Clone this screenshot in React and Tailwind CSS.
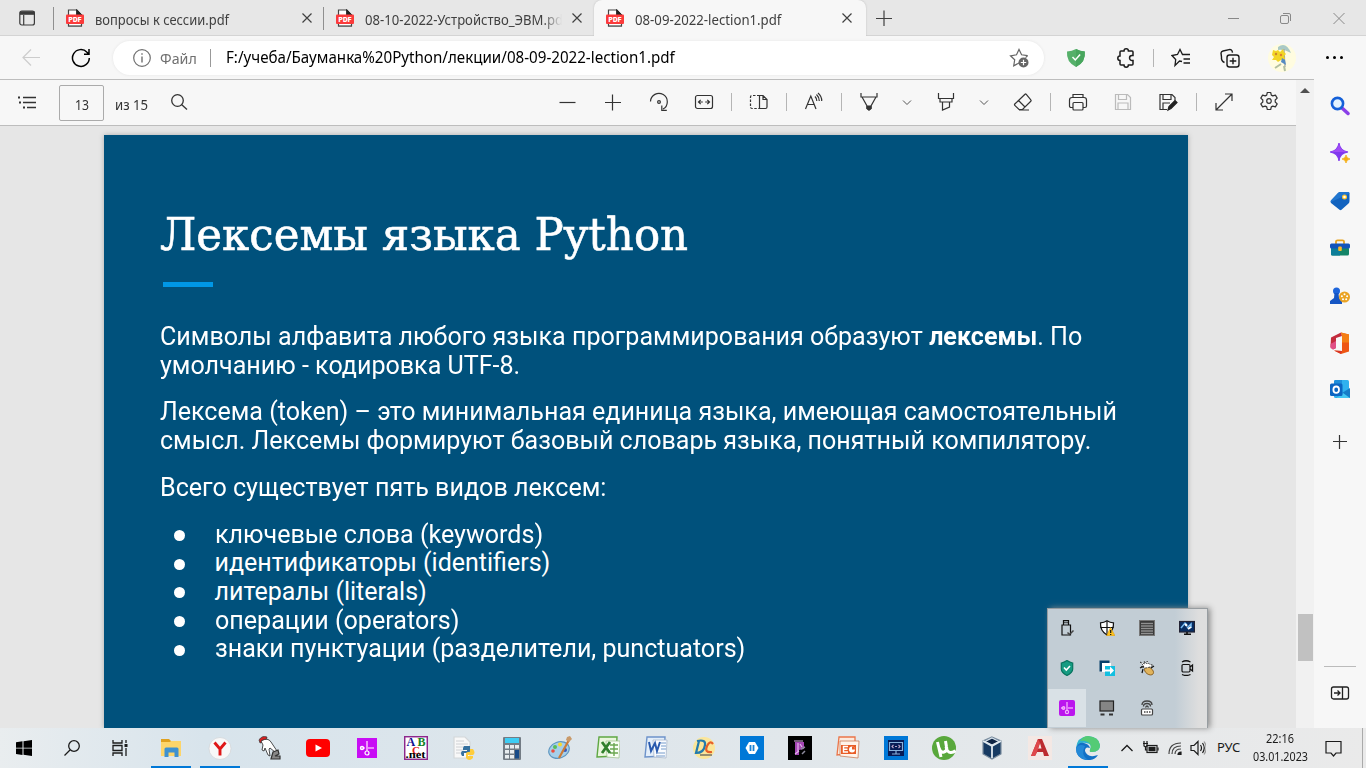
import React, { useLayoutEffect, useRef, useState } from "react";

// Text stretched or squeezed horizontally to a given width.
function Fit({ w, className = "", children }) {
  const ref = useRef(null);
  const [k, setK] = useState(1);
  useLayoutEffect(() => {
    setK(w / ref.current.offsetWidth);
  }, [w]);
  return (
    <span className="block shrink-0 whitespace-nowrap" style={{ width: w }}>
      <span ref={ref} className={"inline-block origin-left " + className} style={{ transform: `scaleX(${k})` }}>
        {children}
      </span>
    </span>
  );
}

function Ic({ s = 20, h, vb, className = "", sw = 1.2, children }) {
  return (
    <svg
      width={s}
      height={h || s}
      viewBox={vb || `0 0 ${s} ${h || s}`}
      fill="none"
      stroke="currentColor"
      strokeWidth={sw}
      className={"block shrink-0 " + className}
    >
      {children}
    </svg>
  );
}

const Sep = ({ className = "" }) => <div className={"w-px h-[18px] bg-[#b5b5b5] shrink-0 " + className} />;

const Pdf = ({ className = "" }) => (
  <Ic s={18} className={className}>
    <path d="M2.500 17V1h8.500l4.500 5v11z" fill="#fff" stroke="#444" />
    <path d="M10.500.5V6h5.500z" fill="#222" stroke="#222" strokeWidth=".8" />
    <rect y="5.500" width="18" height="9.500" rx="1" fill="#fb3b3b" stroke="none" />
    <text x="9" y="12.700" fontSize="6.400" fontWeight="900" fontFamily="Inter, sans-serif" fill="#fff" stroke="none" textAnchor="middle" textLength="13">
      PDF
    </text>
    <path d="M2 17.200h14" stroke="#555" strokeWidth=".8" />
  </Ic>
);

const X = ({ className = "" }) => (
  <Ic s={10} className={className}>
    <path d="M.5.5l9 9M9.500.5l-9 9" />
  </Ic>
);

const Chev = ({ className = "" }) => (
  <Ic s={10} className={"text-[#555] " + className} sw={1}>
    <path d="M1 3.500l4 4 4-4" />
  </Ic>
);

function Tabs() {
  return (
    <div className="flex h-9 shrink-0 items-center bg-[#e7e7e7] text-[14px] text-[#404040] shadow-[inset_0_-1px_0_#d4d4d4]">
      <Ic s={16} h={16} className="ml-[19px] text-[#3b3b3b]">
        <rect x=".8" y="1" width="14.600" height="14" rx="2" />
        <path d="M1 3h14.500" strokeWidth="3.600" />
        <path d="M4.700 5v10" />
      </Ic>
      <div className="ml-[18px] h-[23px] w-px shrink-0 bg-[#8f8f8f]" />
      <Pdf className="ml-3" />
      <div className="ml-[11px] pt-[2px]"><Fit w={134}>вопросы к сессии.pdf</Fit></div>
      <X className="ml-[73px]" />
      <div className="ml-[11px] h-[23px] w-px shrink-0 bg-[#8f8f8f]" />
      <Pdf className="ml-3" />
      <div className="ml-[11px] w-[197px] shrink-0 overflow-hidden pt-[2px] [mask-image:linear-gradient(to_right,black_90%,transparent)]">
        <Fit w={203}>08-10-2022-Устройство_ЭВМ.pdf</Fit>
      </div>
      <X className="ml-[10px]" />
      <div className="ml-[12px] flex h-9 w-[272px] shrink-0 items-center rounded-t-lg bg-[#f7f7f7] shadow-[0_0_2px_#bbb] [clip-path:inset(0_-3px_0_-3px)]">
        <Pdf className="ml-3" />
        <div className="ml-[11px] pt-[2px]"><Fit w={146}>08-09-2022-lection1.pdf</Fit></div>
        <X className="ml-[61px]" />
      </div>
      <Ic s={16} className="ml-[10px]"><path d="M8 .5v16M0 8.500h16" /></Ic>
      <div className="flex-1" />
      <Ic s={12} className="mr-[41px] text-[#888]" sw={1}><path d="M1 6.500h11" /></Ic>
      <Ic s={12} className="mr-[41px] text-[#888]" sw={1}>
        <rect x=".5" y="3.500" width="8" height="8" rx="1.500" />
        <path d="M3 1.500h6q1.500 0 1.500 1.500v6" />
      </Ic>
      <Ic s={12} className="mr-[21px] text-[#888]" sw={1}><path d="M.5 1l11 11M11.500 1l-11 11" /></Ic>
    </div>
  );
}

function AddressBar() {
  return (
    <div className="flex h-[43px] shrink-0 items-center bg-[#f7f7f7]">
      <Ic s={18} className="ml-[22px] text-[#ccc]"><path d="M18 8.500H1M9 .5l-8 8 8 8" /></Ic>
      <Ic s={20} className="ml-[31px] text-black" sw={1.500}>
        <path d="M18.300 10a8.400 8.400 0 1 1-2.300-5.800l1.700 1.700M18 1v5.200h-5" />
      </Ic>
      <div className="ml-[22px] flex h-[34px] w-[931px] shrink-0 items-center rounded-full bg-white shadow-[0_0_3px_#e4e4e4]">
        <Ic s={18} className="ml-[20px] text-[#707070]">
          <circle cx="9" cy="9" r="8.300" />
          <path d="M9 7.500v6M9 4.200v1.600" strokeWidth="1.400" />
        </Ic>
        <div className="ml-[9px] pt-px text-[15px] text-[#707070]"><Fit w={37}>Файл</Fit></div>
        <div className="ml-[13px] h-[18px] w-px bg-[#999]" />
        <div className="ml-[15px] pt-px text-[15.500px] text-black"><Fit w={449}>F:/учеба/Бауманка%20Python/лекции/08-09-2022-lection1.pdf</Fit></div>
        <Ic s={20} className="ml-[334px] text-[#666]">
          <path d="M10 15l-5.300 2.800 1-6-4.200-4 6-1L10 1.500l2.600 5.300 6 .9" />
          <path d="M18.600 7.700l-2 2" />
          <circle cx="14.500" cy="14.500" r="5" fill="#666" stroke="none" />
          <path d="M14.500 11.800v5.400M11.800 14.500h5.400" stroke="#fff" />
        </Ic>
      </div>
      <Ic s={20} className="ml-[22px]">
        <path d="M1 3.500Q6 3 10 1q4 2 8.800 2.500Q20 14 10 19 0 14 1 3.500z" fill="#55b06a" stroke="none" />
        <path d="M10 1q4 2 8.800 2.500Q20 14 10 19z" fill="#48a65e" stroke="none" />
        <path d="M6.500 9l2.800 3 4.800-5.500" stroke="#fff" strokeWidth="1.500" />
      </Ic>
      <Ic s={20} className="ml-[30px] text-[#1b1b1b]" sw={1.500}>
        <path d="M5 3h3a2.200 2.200 0 0 1 4.400 0H16q1 0 1 1v3.500h-1a2.400 2.400 0 0 0 0 4.900h1V16q0 1-1 1h-3.600a2.200 2.200 0 0 1-4.400 0H5q-1 0-1-1v-3.600A2.200 2.200 0 0 1 4 8V4q0-1 1-1z" />
      </Ic>
      <Sep className="ml-[17px]" />
      <Ic s={20} className="ml-[17px] text-[#1b1b1b]" sw={1.300}>
        <path d="M11 13.500L8.500 13 4 17.500l.7-6L1 7.500l5.500-1L9 1.500l2.500 5H19M12.500 11H19M12.500 15H19" />
      </Ic>
      <Ic s={20} className="ml-[29px] text-[#1b1b1b]" sw={1.400}>
        <rect x="7" y="7" width="12" height="12" rx="2.500" />
        <path d="M13 9.700v6.600M9.700 13h6.600M4.500 14.500Q1 13 1.500 9L1 5q.2-1.500 2-2l6-1.400q3-.6 3.500 3" />
      </Ic>
      <Ic s={28} className="ml-[28px]">
        <circle cx="14" cy="14" r="14" fill="#fffce0" stroke="none" />
        <path d="M10 3q8-6 13 6-7-4-13-3z" fill="#a9c9c5" stroke="none" />
        <path d="M16 5l1 18" stroke="#a6a79d" />
        <path d="M5 6l3 1 2-1 2 2 3-3 1 3 2 2-2 2 1 3-4 1-3 2-2-2-4 0 2-3-2-2z" fill="#f2d525" stroke="none" />
        <circle cx="8" cy="10" r="1.200" fill="#cf842b" stroke="none" /><circle cx="13" cy="11" r="1.200" fill="#df832c" stroke="none" />
        <path d="M14 14l3 2 1 5-5-3z" fill="#568bc2" stroke="none" />
        <path d="M13 20l-6 4M16 22l1 5" stroke="#b2bfa0" strokeWidth="2" />
      </Ic>
      <div className="ml-[30px] flex gap-[4px]">
        <i className="h-[3px] w-[3px] rounded-full bg-black" /><i className="h-[3px] w-[3px] rounded-full bg-black" /><i className="h-[3px] w-[3px] rounded-full bg-black" />
      </div>
    </div>
  );
}

function PdfBar() {
  return (
    <div className="flex h-[47px] shrink-0 items-center border-y border-[#bdbdbd] bg-[#f7f7f7] text-[#333]">
      <Ic s={18} className="ml-[18px] -mt-[2px]" sw={1.300}>
        <path d="M5 4.500h13M5 9.500h13M9 14.500h9" /><path d="M0 4.500h2M1 9.500h2M5 14.500h2" strokeWidth="2" />
      </Ic>
      <div className="ml-[23px] flex h-9 w-[45px] shrink-0 items-center justify-center rounded-[2px] border border-[#ababab] pt-[3px] text-[14px]"><Fit w={14}>13</Fit></div>
      <div className="ml-[11px] pt-[4px] text-[14px]"><Fit w={33}>из 15</Fit></div>
      <Ic s={18} className="ml-[22px] -mt-px" sw={1.300}><circle cx="7.500" cy="7.500" r="5.800" /><path d="M11.500 11.500l5.500 5" /></Ic>
      <div className="-mt-px flex items-center">
        <Ic className="ml-[370px]"><path d="M1.500 10.500h16" /></Ic>
        <Ic className="ml-[25px]"><path d="M2 10.500h16M9.500 2.500v16" /></Ic>
        <Ic className="ml-[26px]"><path d="M1.500 9.500a8.400 8.400 0 1 1 12.500 7.600M12.800 13.500v4.800h5" /><circle cx="10" cy="10" r="1.400" /></Ic>
        <Ic className="ml-[25px]"><rect x="1.500" y="3.500" width="17" height="13" rx="2" /><path d="M4.500 10h4.300M11.200 10h4.300M6.700 7.800L4.500 10l2.200 2.200M13.300 7.800l2.200 2.200-2.200 2.200" /></Ic>
        <Sep className="ml-[17px]" />
        <Ic className="ml-[17px]"><path d="M10.500 3.500H14l4 4V15q0 1.500-1.500 1.500h-6zM14 3.500v4h4" /><path d="M10.500 3.500H3Q1.500 3.500 1.500 5v10q0 1.500 1.500 1.500h7" strokeDasharray="2.500 1.500" /></Ic>
        <Sep className="ml-[17px]" />
        <Ic className="ml-[17px]"><path d="M1.500 17L6.800 4 12 17M3.200 12.500h7M11 4.500q2 2 1.800 4.500M12.500 2.500q3 3 2.800 6.500M14 1q4 3.500 3.700 8" /></Ic>
        <Sep className="ml-[17px]" />
        <Ic className="ml-[17px]"><path d="M2 1v4h16V1M3 5l5 9v2.500l2 1.500 2-1.500V14l5-9M8 14h4" /><path d="M8 14.500h4v2l-2 1.500-2-1.500z" fill="#333" /></Ic>
        <Chev className="ml-[23px]" />
        <Ic className="ml-[24px]"><path d="M2.500 1v5.500h15V1M4 6.500V10h12V6.500M6.500 10v8l7-3v-5" /></Ic>
        <Chev className="ml-[23px]" />
        <Ic className="ml-[24px]"><path d="M12 2.300L1.800 12q-.6.700 0 1.300L6 17.500h3.500l8.300-8.200q.7-.7 0-1.400L13.300 2.300q-.6-.6-1.300 0zM5.500 8.500l6.500 6.500M6 18h10" /></Ic>
        <Sep className="ml-[17px]" />
        <Ic className="ml-[17px]"><path d="M5 15.500H3.200Q1.500 15.500 1.500 14V8q0-2.500 2.500-2.500h12q2.500 0 2.500 2.500v6q0 1.500-1.700 1.500H15M5 5.500v-3h10v3" /><rect x="5" y="10.500" width="10" height="7.500" rx="1" /></Ic>
        <Ic className="ml-[25px] text-[#bbb]"><path d="M2.500 2.500h12l3 3v12h-15zM5.500 2.500v5h8v-5M5 17.500V11h10v6.500" /></Ic>
        <Ic className="ml-[25px]"><path d="M9 17.500H2v-15h12l3 3v3M5 2.500v5h8v-5M5 17V11h7" /><path d="M10 18l1-3.500 6-6 2 2-6 6z" fill="#222" stroke="#222" /></Ic>
        <Sep className="ml-[18px]" />
        <Ic className="ml-[17px]"><path d="M2 18L18 2M11 2h7v7M2 11v7h7" /></Ic>
        <Ic className="ml-[25px] -mt-[2px]"><path d="M8.300 1.500h3.400l.6 2.600 1.500.8 2.600-.8 1.800 3-2 1.900v2l2 1.900-1.800 3-2.600-.8-1.500.8-.6 2.600H8.300l-.6-2.600-1.500-.8-2.600.8-1.800-3 2-1.900V9l-2-1.900 1.800-3 2.600.8 1.500-.8z" strokeLinejoin="round" /><circle cx="10" cy="10" r="2.300" /></Ic>
      </div>
    </div>
  );
}

const Bullet = ({ w, children }) => (
  <li className="flex h-[28.700px] items-center">
    <i className="ml-[14px] mt-px h-[11px] w-[11px] rounded-full bg-white" />
    <div className="ml-[29.500px]"><Fit w={w}>{children}</Fit></div>
  </li>
);

function Slide() {
  return (
    <div className="ml-[104px] mt-[9px] h-[593px] w-[1084px] bg-[#00517c] pl-[57px] pt-[64px] font-[Roboto,sans-serif] text-[25px] leading-[28.700px] text-white shadow-[0_0_5px_#aaa]">
      <h1 className="-ml-px h-[68px] font-['DejaVu_Serif',serif] text-[45px] leading-[71px] [-webkit-text-stroke:0.6px_white]"><Fit w={528}>Лексемы языка Python</Fit></h1>
      <div className="ml-[1.500px] mt-[15px] h-[5px] w-[50.500px] bg-[#0097e6]" />
      <div className="-ml-px mt-[36px]">
        <Fit w={922}>Символы алфавита любого языка программирования образуют <b>лексемы</b>. По</Fit>
        <Fit w={360}>умолчанию - кодировка UTF-8.</Fit>
      </div>
      <div className="-ml-px mt-[18px]">
        <Fit w={957}>Лексема (token) – это минимальная единица языка, имеющая самостоятельный</Fit>
        <Fit w={931}>смысл. Лексемы формируют базовый словарь языка, понятный компилятору.</Fit>
      </div>
      <div className="-ml-px mt-[18px]"><Fit w={446}>Всего существует пять видов лексем:</Fit></div>
      <ul className="-ml-px mt-[18px]">
        <Bullet w={328}>ключевые слова (keywords)</Bullet>
        <Bullet w={336}>идентификаторы (identifiers)</Bullet>
        <Bullet w={212}>литералы (literals)</Bullet>
        <Bullet w={244}>операции (operators)</Bullet>
        <Bullet w={530}>знаки пунктуации (разделители, punctuators)</Bullet>
      </ul>
    </div>
  );
}

function Sidebar() {
  return (
    <div className="flex w-[52px] shrink-0 flex-col items-center bg-[#f7f7f7] pt-[17px]">
      <div className="flex flex-col items-center gap-[27.400px]">
        <Ic><path d="M12 12l6 5.500" stroke="#8a3fe8" strokeWidth="3.500" strokeLinecap="round" /><circle cx="7.500" cy="7.500" r="5.600" stroke="#1460d8" strokeWidth="2.600" fill="#e1f2ff" /></Ic>
        <Ic><path d="M9 0q.8 8 9 9-8.200 1-9 9-1-8-9-9 8-1 9-9z" fill="#8038ee" stroke="#8038ee" /><path d="M9 0q.8 8 9 9H0q8-1 9-9z" fill="#a04bf5" stroke="none" /><path d="M16 12q.5 3.500 4 4-3.500.5-4 4-.5-3.500-4-4 3.500-.5 4-4z" fill="#f5ae15" stroke="#f5ae15" strokeWidth=".8" /></Ic>
        <Ic><path d="M10 1h8q1.500 0 1.500 1.500V10q0 1.500-1 2.500l-7 6.300q-1 .8-2 0L1 12q-1-1.200 0-2.200L8 2q.8-1 2-1z" fill="#1263bf" stroke="none" /><path d="M10 1h8q1.500 0 1.500 1.500L1 11q-.8-1 0-1.700L8 2z" fill="#2176cf" stroke="none" /><circle cx="14.500" cy="6" r="1.900" fill="#fff" stroke="#ffc329" /></Ic>
        <Ic><path d="M6 6V3.500Q6 2.300 7.500 2.300h5Q14 2.300 14 3.500V6" stroke="#e8a31f" strokeWidth="1.800" /><rect x="1" y="9" width="18" height="8.500" rx="1.500" fill="#148467" stroke="none" /><path d="M1 9h9v8.500H2.500Q1 17.500 1 16z" fill="#0d7e99" stroke="none" /><rect y="5.500" width="20" height="5" rx="1.500" fill="#1354bb" stroke="none" /><rect x="8.200" y="8.500" width="3.600" height="4.500" rx="1" fill="#fdb827" stroke="none" /></Ic>
        <Ic><circle cx="6.500" cy="5" r="3.500" fill="#1e65db" stroke="none" /><path d="M4.500 7h4l.5 5 3 3v3H0v-3l4-3z" fill="#1656c4" stroke="none" /><circle cx="14.500" cy="11" r="5.500" fill="#eaa323" stroke="none" /><g fill="#fff" stroke="none"><circle cx="14.500" cy="8.200" r="1" /><circle cx="11.900" cy="10.200" r="1" /><circle cx="17.100" cy="10.200" r="1" /><circle cx="13" cy="13.300" r="1" /><circle cx="16.200" cy="13.300" r="1" /></g></Ic>
        <Ic s={20} h={22} className="-mt-px"><path d="M1 5.500L11 .5l1 3.500-6 2v10l-3 1.500L.5 15z" fill="#c32b3d" stroke="none" /><path d="M.5 12L6 9v7l-3 1.500L.5 16z" fill="#e04f85" stroke="none" /><path d="M11 .5l8 2v17l-8 2.500-7-3.500 8 .5V4z" fill="#ee5613" stroke="none" /><path d="M11 .5l8 2v8h-7V4z" fill="#f47e14" stroke="none" /><path d="M4 18.500l8 .500-1 3z" fill="#d83524" stroke="none" /></Ic>
        <Ic className="-mt-[2px]"><rect x="4" y="1" width="15" height="18" rx="1.500" fill="#2fb1ef" stroke="none" /><path d="M5 1h7v6H4V2z" fill="#1c8edb" stroke="none" /><path d="M12 14l8-5v10H6z" fill="#167dc8" stroke="none" /><path d="M13 14l7 5H6z" fill="#42c7f3" stroke="none" /><rect y="4.500" width="12.500" height="12.500" rx="1.500" fill="#0b65c2" stroke="none" /><ellipse cx="6.200" cy="10.700" rx="2.800" ry="3.200" stroke="#fff" strokeWidth="1.800" /></Ic>
      </div>
      <Ic s={14} className="mt-[36px] text-[#333]"><path d="M6.500 0v14M0 6.500h14" /></Ic>
      <div className="flex-1" />
      <div className="h-px w-8 bg-[#bbb]" />
      <Ic s={20} className="mb-[25px] mt-[16px] text-[#222]" sw={1.300}><rect x="1.500" y="4" width="17" height="12" rx="2" /><path d="M12.500 4v12M4 10h6M7.500 7.500L10 10l-2.500 2.500" /></Ic>
    </div>
  );
}

const Cell = ({ on, children }) => (
  <div className={"m-px flex h-[38px] w-[38px] items-center justify-center text-[#111] " + (on ? "bg-[#d9e1e6]" : "")}>{children}</div>
);

function Tray() {
  return (
    <div className="absolute left-[1047px] top-[608px] grid h-[120px] w-[160px] grid-cols-4 bg-gradient-to-r from-[#c2cdd5] from-80% to-[#dedede] to-95% shadow-[inset_1px_1px_0_#979da1,1px_0_0_#979da1,3px_0_6px_#888]">
      <Cell><Ic s={16} sw={1.200}><path d="M4.500 5V.7h5V5M3 5h8.500v10H3zM6 2v1.200M8 2v1.200" /><path d="M8.500 12.500l2 2 4-4" stroke="#444" strokeWidth="1.500" /></Ic></Cell>
      <Cell><Ic s={16} sw={1.200}><path d="M8 .8q3 2 6.500 2 .5 8-6.500 12.200Q1 11 1.500 2.800 5 2.800 8 .8z" fill="#fff" /><path d="M8 1v14M1.500 7.500h13" /><path d="M11.500 7.500L16 15.700H7.500z" fill="#ffc21c" stroke="#d79909" strokeWidth=".5" /><path d="M11.700 10v3M11.700 14v1" /></Ic></Cell>
      <Cell><Ic s={16}><rect x=".5" y=".5" width="15" height="15" fill="#333" stroke="#777" /><path d="M2 3.500h12M2 6h12M2 8.500h12M2 11h12M2 13.500h12" stroke="#909090" strokeWidth="1.300" /></Ic></Cell>
      <Cell><Ic s={16}><rect x=".5" y="1.500" width="15" height="10.500" fill="#082d62" stroke="#223" /><path d="M2 8l4-5 2 2M8 8l4-4v4" stroke="#79bdf3" strokeWidth="1.500" /><path d="M6 4l2 2M9 9l3-2" stroke="#fff" strokeWidth="2" /><path d="M5 14.200h7M8 12v2" strokeWidth="1.600" /></Ic></Cell>
      <Cell><Ic s={16}><path d="M8 .5q3 2 5.700 2.500v6q0 3.500-5.700 6.500-5.700-3-5.700-6.500V3Q5 2.500 8 .5z" fill="#169b82" stroke="#08745f" /><path d="M5 7.500L7.300 10 11 6" stroke="#fff" strokeWidth="1.600" /></Ic></Cell>
      <Cell><Ic s={16}><path d="M.5.5h10v3h-7v8h-3z" fill="#07406b" stroke="none" /><path d="M3 3h9v9H3z" fill="#fff" stroke="none" /><path d="M6 6h10v10H6z" fill="#12bfe0" stroke="none" /><path d="M5 9.500h6V6.500l4 4-4 4v-3H5z" fill="#fff" stroke="none" /></Ic></Cell>
      <Cell><Ic s={16}><ellipse cx="10" cy="11" rx="5" ry="3.300" transform="rotate(35 10 11)" fill="#e1b45d" stroke="#835716" strokeWidth=".8" /><path d="M1 2l5 2-1-3 3 3V1l2 3 4 1-3 2-4 1-5-1 2-2z" fill="#fff" stroke="#333" strokeWidth=".8" strokeDasharray="2 1" /><path d="M12 8l3-2M4 9l-1 4M1 8l4-2" /></Ic></Cell>
      <Cell><Ic s={16}><rect x="3" y="4.500" width="8" height="7.500" rx="1.200" /><path d="M11 7l2.500-2v6L11 9M3 2q4-2.500 8.500 0M3 14.500q4 2 8.500 0" strokeWidth="1.300" /></Ic></Cell>
      <Cell on><Ic s={16}><rect width="16" height="16" rx="2" fill="#bb16ee" stroke="none" /><path d="M8 2v8M2 8h4M9 8h5" stroke="#ed9afa" strokeWidth="1.500" /><circle cx="8" cy="12" r="1.600" stroke="#f3b4fb" /><circle cx="4.500" cy="8" r="1.300" stroke="#f3b4fb" /></Ic></Cell>
      <Cell><Ic s={16}><rect x="1" y="1" width="13.500" height="10" fill="#858585" stroke="#222" /><path d="M1.500 14.500h4M10 14.500h4" stroke="#333" strokeWidth="2" /></Ic></Cell>
      <Cell><Ic s={16}><rect x="2.500" y="9" width="11" height="6" rx="1" fill="#fff" stroke="#444" /><path d="M3 5q0-4 5-4t5 4M4.500 6.500q0-3 3.500-3t3.500 3M6.500 7.500q1.500-3 3 0M5 12h1.500M7.500 12H9M10 12h1.500" stroke="#444" strokeWidth="1.300" /></Ic></Cell>
    </div>
  );
}

const Task = ({ on, className = "", children }) => (
  <div className={"flex h-10 w-12 shrink-0 flex-col items-center " + className}>
    <div className="flex h-[38px] items-center pt-[2px]">{children}</div>
    {on && <div className="h-[2px] w-10 bg-[#0078d7]" />}
  </div>
);

function Taskbar() {
  return (
    <div className="flex h-10 shrink-0 items-center bg-gradient-to-r from-[#e9edef] via-[#d8e4ec] via-15% to-[#eaeaea] text-[#1b1b1b]">
      <Task><Ic s={16}><path d="M0 2.300l6.500-1v6.400H0zM7.500 1.200L16 0v7.700H7.500zM0 8.500h6.500V15L0 14zM7.500 8.500H16V16l-8.500-1.200z" fill="#000" stroke="none" /></Ic></Task>
      <Task><Ic s={16} sw={1.300}><circle cx="10" cy="6" r="5.300" /><path d="M6 10L.5 15.500" /></Ic></Task>
      <Task><Ic s={16} sw={1.300}><path d="M1 0v3h9V0M1 16v-3h9v3M1 5.500h9v5H1zM14 0v3M14 8v8" /><path d="M12.500 5.500h3" strokeWidth="3" /></Ic></Task>
      <Task on className="ml-[3px]"><Ic s={22}><path d="M1 2h8l2 2h10v15H1z" fill="#e0a11e" stroke="none" /><path d="M1 5h9l1-1h10v15H1z" fill="#fdd56a" stroke="none" /><path d="M4.500 20V12q0-1.500 1.500-1.500h11q1.500 0 1.500 1.500v8h-4v-4.500h-6V20z" fill="#3e91d0" stroke="none" /></Ic></Task>
      <Task on className="ml-px"><Ic s={24}><circle cx="12" cy="12.500" r="11" fill="#f8f8f8" stroke="#d0d3d6" strokeWidth=".7" /><path d="M6.500 6.500L12 13l5.500-6.500M12 12v7.500" stroke="#df1717" strokeWidth="2.900" /></Ic></Task>
      <Task className="ml-px"><Ic s={24}><path d="M2 4q3-5 8-3l-1 4-6 2z" fill="#d42121" stroke="#333" strokeWidth=".7" /><path d="M4 5q7-4 10 1l6 9-2 1-5-4-1 1 1 7-2-1-3-7-1 3-2-1 1-5z" fill="#fff" stroke="#222" strokeWidth=".8" /><path d="M16 16l5-2 1 4-4 2h5v3h-9z" fill="#888" stroke="#333" /></Ic></Task>
      <Task className="ml-px"><Ic s={24}><rect y="3" width="24" height="18" rx="4" fill="#f00" stroke="none" /><path d="M9.500 8.500v7l6.500-3.500z" fill="#fff" stroke="none" /></Ic></Task>
      <Task className="ml-px"><Ic s={20}><rect width="20" height="20" fill="#c80df5" stroke="none" /><path d="M10 3v10M3 10h5M11 10h6" stroke="#f4aefc" strokeWidth="1.700" /><circle cx="10" cy="15" r="2" stroke="#fff" /><circle cx="5" cy="10" r="1.600" stroke="#fff" /></Ic></Task>
      <Task className="ml-px"><Ic s={24}><rect x=".7" y=".7" width="22.600" height="22.600" fill="#fff" stroke="#8d278c" strokeWidth="1.500" /><g fontFamily="Liberation Serif, serif" fontWeight="bold" stroke="none"><text x="2.500" y="10" fontSize="12" fill="#11118f">A</text><text x="13.500" y="10" fontSize="12" fill="#138524">B</text><text x="8" y="17.500" fontSize="11" fill="#e12020">C</text><text x="1.500" y="22" fontSize="10" fill="#000" textLength="20" lengthAdjust="spacingAndGlyphs">.net</text></g></Ic></Task>
      <Task><Ic s={24}><path d="M2 1h11l5 5v16H2z" fill="#f8f8f8" stroke="#d4d7d9" /><path d="M4 5h8M4 8h12M4 11h12M4 14h8M4 17h5" stroke="#c4c7ca" strokeWidth=".8" /><path d="M12 10h6v5q0 2-2 2h-4v3h-2q-2-3 0-5h5v-1h-4v-2z" fill="#36719f" stroke="none" /><path d="M18 13h3q3 4 0 6h-5v1h5v2q-4 4-7 0v-4q0-2 2-2h2z" fill="#fecd3c" stroke="none" /></Ic></Task>
      <Task><Ic s={24}><rect x="3" y="1" width="18" height="23" rx="1" fill="#737c85" stroke="none" /><rect x="5" y="2" width="14" height="5" fill="#3ecdf4" stroke="none" /><path d="M5 9h4v3.500H5zM10 9h4v3.500h-4zM15 9h4v3.500h-4zM5 14h4v3.500H5zM10 14h4v3.500h-4zM5 19h4v3.500H5zM10 19h4v3.500h-4z" fill="#e8edf0" stroke="none" /><path d="M15 14h4v8.500h-4z" fill="#174a87" stroke="none" /></Ic></Task>
      <Task><Ic s={24}><ellipse cx="11" cy="14" rx="10.500" ry="8" transform="rotate(-20 11 14)" fill="#a5cfea" stroke="#5f97c0" /><circle cx="7" cy="11" r="2" fill="#58bd58" stroke="none" /><circle cx="12" cy="8.500" r="2" fill="#f7d92c" stroke="none" /><circle cx="5" cy="15" r="1.800" fill="#ea4e3d" stroke="none" /><circle cx="17" cy="14" r="2" fill="#3a58bb" stroke="none" /><path d="M21 4L11 22" stroke="#cc7b38" strokeWidth="2.200" /><path d="M19 1l3-1 2 3-3 3-3-2z" fill="#c99a6a" stroke="none" /></Ic></Task>
      <Task><Ic s={24}><path d="M3 1h18l-1 19-19 1z" fill="#e9f6dd" stroke="#5fa843" strokeWidth="1.400" /><path d="M10 5h14l-1 17-12-1z" fill="#f9fff5" stroke="#a5c493" strokeWidth=".8" /><path d="M14 9h8M14 13h8M14 17h8M18 7v13" stroke="#6ba850" strokeWidth="1.400" /><path d="M6 6l8 11M14 6L6 17" stroke="#30802c" strokeWidth="2.800" /></Ic></Task>
      <Task><Ic s={24}><path d="M3 1h18l-1 19-19 1z" fill="#e3eefa" stroke="#6d93ca" strokeWidth="1.400" /><path d="M9 4h14l-1 18-12-1z" fill="#fafcff" stroke="#aab8cb" strokeWidth=".8" /><path d="M17 7h5M17 10h5M17 13h5M12 17h9M12 20h9" stroke="#779ccc" /><path d="M5 6l2 9 4-8 2 8 3-9" stroke="#2859ae" strokeWidth="2" /></Ic></Task>
      <Task><Ic s={24}><circle cx="12" cy="12" r="11" fill="#fbe69a" stroke="none" /><path d="M5 5q9-2 8 4-1 8-9 8L7 5" stroke="#247bae" strokeWidth="2.200" /><path d="M21 8q-3-4-6 2-3 7 5 6" stroke="#e66028" strokeWidth="2.200" /><path d="M8 19h12" stroke="#555" /></Ic></Task>
      <Task><Ic s={24}><rect width="24" height="24" fill="#0078d7" stroke="none" /><path d="M9 6h6l3.500 6-3.500 6H9l-3.500-6z" fill="#fff" stroke="none" /><path d="M10.500 9v6M13.500 9v6" stroke="#1b83d5" strokeWidth="1.800" /></Ic></Task>
      <Task><Ic s={24}><rect width="24" height="24" fill="#000" stroke="none" /><path d="M7 6h9v7l-5 1v5H7z" fill="#a545b4" stroke="none" /><path d="M10 7v9M12 8l2 3M6 5l9 0M7 18l4-3" stroke="#e2b5ea" /><path d="M13 13l4-2M14 18l3-3" stroke="#8d8a9d" strokeWidth="1.500" /></Ic></Task>
      <Task><Ic s={24}><path d="M3 1h16v16L1 19z" fill="#fceadd" stroke="#ea754a" strokeWidth="1.300" /><path d="M4 5h19l-1 17-18-2z" fill="#fff3ea" stroke="#c97f5d" strokeWidth=".8" /><path d="M5 9h15v9H5z" fill="#e95c26" stroke="none" /><path d="M12 10.500H7.500v5.500H12M7.500 13.300h4" stroke="#fff" strokeWidth="1.400" /><circle cx="16" cy="13.500" r="3" fill="#fff" stroke="none" /><path d="M16 13.500v-3a3 3 0 0 1 3 3z" fill="#e95c26" stroke="none" /></Ic></Task>
      <Task><Ic s={24}><rect width="24" height="24" fill="#0078d7" stroke="none" /><rect x="4" y="4" width="16" height="16" fill="#081b55" stroke="none" /><path d="M5.500 6.500h13v8h-13zM12 14.500v3M8 18h8" stroke="#89b2dc" /><path d="M9.500 8.800l-1.500 1.700 1.500 1.700M14.500 8.800l1.500 1.700-1.500 1.700M11 10.500h2" stroke="#b8a0c5" /></Ic></Task>
      <Task><Ic s={24}><circle cx="12" cy="12" r="12" fill="#59a83c" stroke="none" /><path d="M5.500 6L9 21M7 12q1.500 5 5 4t2.500-5L13.500 5M14 11q1.500 6 5 5.500 3 0 4.500-2" stroke="#fff" strokeWidth="3" /></Ic></Task>
      <Task className="-ml-px"><Ic s={24} className="ml-px"><path d="M12 1l9 4v13l-9 5-9-5V5z" fill="#173b63" stroke="#7b8d9e" /><path d="M12 2l7 3.500-7 3.500-7-3.500z" fill="#0e2444" stroke="#dce7ef" /><path d="M3 5l9 5 9-5M12 10v12" stroke="#dfe8ef" strokeWidth="1.800" /></Ic></Task>
      <Task className="ml-px"><Ic s={24}><rect width="24" height="24" fill="#f4e8e4" stroke="none" /><path d="M3 20L10 3h4l7 17h-5l-1-4H9l-2 4z" fill="#bc2b2f" stroke="none" /><path d="M10 12.500h3.500L12 7z" fill="#f4e8e4" stroke="none" /><path d="M3 20L10 3l2 4-3 9-2 4z" fill="#df484b" stroke="none" /></Ic></Task>
      <Task on><Ic s={24}><path d="M0 12Q1 1 12 0q11 1 12 9 0 7-8 7-3 0-2-2 3-6-4-7Q3 6 0 12z" fill="#2cb3cf" stroke="none" /><path d="M12 0q11 1 12 9 0 7-8 7-3 0-2-2 3-7-5-9-2-.5-5 0 3-5 8-5z" fill="#54cb75" stroke="none" /><path d="M0 12q2-6 8-5 5 1 6 5-5-2-5 3 2 6 9 5l4-1q-4 6-12 5Q0 22 0 12z" fill="#1270c6" stroke="none" /><path d="M9 10q-5 9 3 14Q0 23 0 12q3-5 9-2z" fill="#2388d7" stroke="none" /></Ic></Task>
      <Ic s={12} className="ml-[9px]" sw={1.300}><path d="M.5 9L6 3.500 11.500 9" /></Ic>
      <Ic s={17} className="ml-[9px]"><rect x="5" y="5.500" width="10" height="7" /><path d="M6.500 9h7" strokeWidth="4.500" /><path d="M16 7.500v3M1 3.500h5M2 1v3M5 1v3M2 4v2l1.500 1L5 6V4M3.500 7v3H5" /></Ic>
      <Ic s={14} className="ml-[9px]"><path d="M1 13Q1 2 13 2M4 13q0-8 9-8M7 13q0-5 6-5" stroke="#444" /><path d="M10 14q0-3 3-3v3z" fill="#222" /></Ic>
      <Ic s={16} className="ml-[8px]"><path d="M1 5.500h3l4-4v13l-4-4H1zM10.500 5q2 3 0 6M12.500 3q3.500 5 0 10" /><path d="M14 1.500q4.500 6.500 0 13" stroke="#999" /></Ic>
      <div className="ml-[11px] text-[13px]"><Fit w={23}>РУС</Fit></div>
      <div className="ml-[13px] flex w-[54px] shrink-0 flex-col items-center text-[12.500px] leading-[18px]"><Fit w={28}>22:16</Fit><Fit w={55}>03.01.2023</Fit></div>
      <Ic s={17} className="ml-[18px]"><path d="M1 1.500h15v11.500h-5l-2.500 3L6 13H1z" /></Ic>
      <div className="ml-[20px] h-10 w-px bg-[#aaa]" />
    </div>
  );
}

export default function App() {
  return (
    <div className="relative flex h-[768px] w-[1366px] flex-col overflow-hidden font-['Noto_Sans','Open_Sans',sans-serif]">
      <Tabs />
      <AddressBar />
      <div className="flex h-[649px] shrink-0">
        <div className="flex w-[1296px] shrink-0 flex-col overflow-hidden bg-[#e6e6e6]">
          <PdfBar />
          <Slide />
        </div>
        <div className="flex w-[18px] shrink-0 flex-col items-center border-t border-[#bdbdbd] bg-[#f1f1f1]">
          <Ic s={10} h={6} className="mt-[7px]"><path d="M0 6l5-5 5 5z" fill="#505050" stroke="none" /></Ic>
          <div className="mt-[521px] h-[47px] w-[15px] bg-[#c1c1c1]" />
        </div>
        <Sidebar />
      </div>
      <Tray />
      <Taskbar />
    </div>
  );
}
